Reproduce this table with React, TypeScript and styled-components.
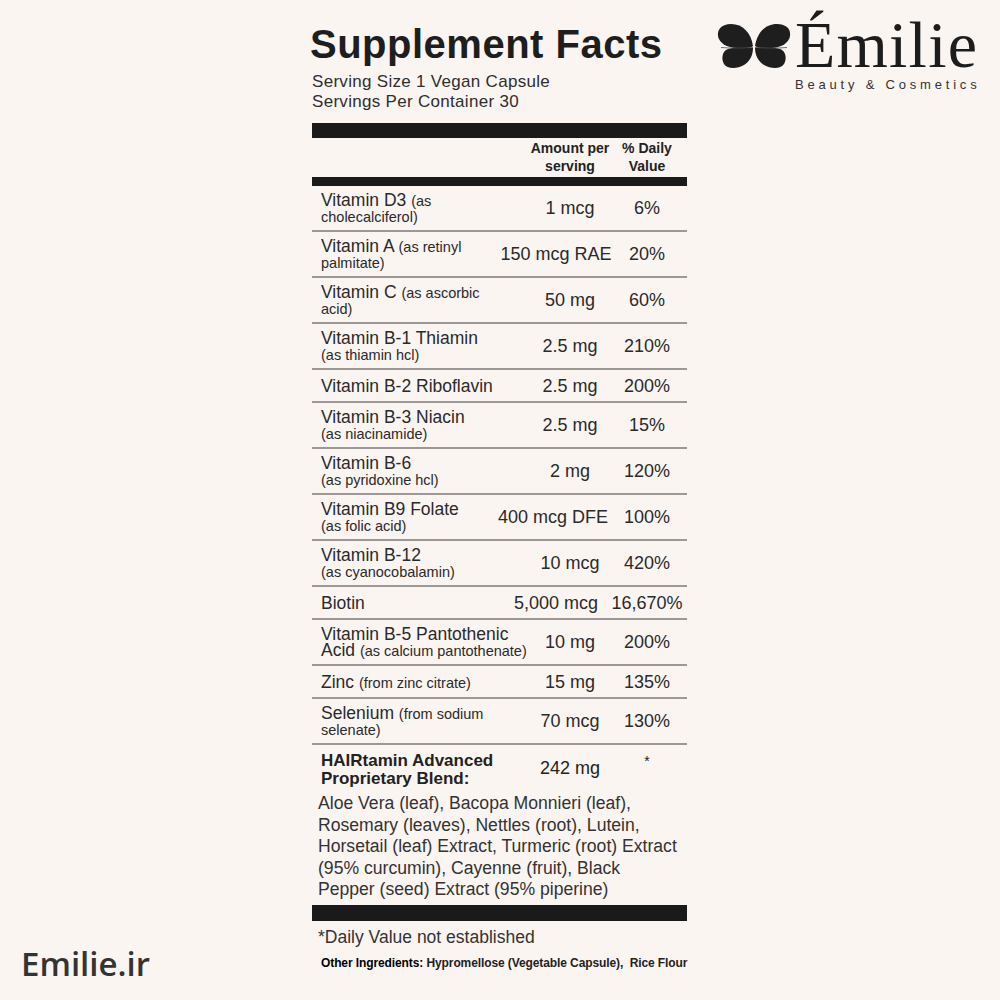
import React from 'react';
import styled, { createGlobalStyle } from 'styled-components';

const GlobalStyle = createGlobalStyle`
  html, body {
    margin: 0;
    padding: 0;
    background: #fbf5f2;
  }
  body {
    font-family: "Liberation Sans", Arial, sans-serif;
    color: #2a2a2a;
  }
`;

// Whole canvas: left corner text, label, logo
const Page = styled.div`
  width: 1000px;
  height: 1000px;
  display: grid;
  grid-template-columns: 310px 380px 1fr;
  overflow: hidden;
  background: #fbf5f2;
`;

const LeftCol = styled.div`
  display: flex;
  flex-direction: column;
  justify-content: flex-end;
  padding: 0 0 16px 21px;
`;

const SiteName = styled.div`
  font-family: "Open Sans", "Liberation Sans", sans-serif;
  font-weight: 600;
  font-size: 33px;
  line-height: 40px;
  color: #333;
`;

// Supplement label
const Label = styled.div`
  display: flex;
  flex-direction: column;
  padding: 20px 3px 0 2px;
`;

const Title = styled.h1`
  margin: 0 0 0 -2px;
  font-size: 40px;
  line-height: 48px;
  font-weight: 700;
  letter-spacing: 0.5px;
  color: #1e1e1e;
  white-space: nowrap;
`;

const Serving = styled.div`
  margin-top: 4px;
  font-size: 17px;
  line-height: 20px;
  letter-spacing: 0.3px;
  color: #2e2e2e;
`;

const Bar = styled.div<{ thickness: number; gap?: number }>`
  height: ${(p) => p.thickness}px;
  margin-top: ${(p) => p.gap || 0}px;
  background: #1a1a1a;
`;

const Grid = styled.div`
  display: grid;
  grid-template-columns: minmax(0, 1fr) 90px 64px;
  padding: 0 8px 0 9px;
`;

const HeaderRow = styled(Grid)`
  padding-top: 1px;
  padding-bottom: 2px;
  font-size: 14px;
  line-height: 18px;
  font-weight: 700;
  color: #222;
`;

const HeadCell = styled.div<{ col: number }>`
  grid-column: ${(p) => p.col};
  display: flex;
  flex-direction: column;
  align-items: center;
  white-space: nowrap;
`;

const Row = styled(Grid)`
  box-sizing: border-box;
  min-height: 33px;
  padding-top: 6px;
  padding-bottom: 6px;
  align-items: center;
  border-bottom: 2px solid #9d9896;
  font-size: 17.5px;
  line-height: 16px;
  color: #2a2a2a;
`;

const Name = styled.div`
  display: flex;
  flex-direction: column;
  white-space: nowrap;
`;

const NameLine = styled.span`
  display: block;
  height: 16px;
  line-height: 16px;
`;

const Sub = styled.span`
  font-size: 14.5px;
  line-height: 16px;
`;

// Amount / %DV cell; wide values sit a little left of the column centre
const Value = styled.div<{ shift?: number }>`
  display: flex;
  justify-content: center;
  white-space: nowrap;
  font-size: 18px;
  line-height: 16px;
  padding-right: ${(p) => p.shift || 0}px;
`;

const BlendRow = styled(Grid)`
  padding-top: 7px;
  font-size: 17px;
  line-height: 18px;
  color: #222;
`;

const BlendName = styled.div`
  font-weight: 700;
  white-space: nowrap;
`;

const BlendAmount = styled(Value)`
  padding-top: 7px;
  line-height: 18px;
`;

const Star = styled(Value)`
  font-size: 14px;
  line-height: 18px;
`;

const Ingredients = styled.div`
  margin-top: 5px;
  padding-left: 6px;
  font-size: 17.6px;
  line-height: 21.5px;
  color: #333;
  white-space: nowrap;
`;

const Footnote = styled.div`
  margin-top: 6px;
  padding-left: 6px;
  font-size: 17.5px;
  line-height: 20px;
  color: #333;
`;

const Other = styled.div`
  margin-top: 8px;
  padding-left: 9px;
  font-family: "Liberation Sans Narrow", "Arial Narrow", "Liberation Sans", sans-serif;
  font-size: 12px;
  line-height: 16px;
  font-weight: 700;
  color: #222;
  white-space: nowrap;
  letter-spacing: -0.1px;
`;

const OtherBold = styled.span`
  font-weight: 700;
  color: #000;
`;

// Brand logo, top right
const RightCol = styled.div`
  padding-left: 27px;
`;

const Logo = styled.div`
  display: flex;
  align-items: flex-start;
  gap: 4px;
`;

const Butterfly = styled.svg`
  margin-top: 23px;
  flex: none;
`;

const Brand = styled.div`
  padding-top: 14px;
  display: flex;
  flex-direction: column;
`;

const Wordmark = styled.div`
  font-family: "Liberation Serif", "Times New Roman", serif;
  font-size: 66px;
  line-height: 62px;
  letter-spacing: 1.2px;
  color: #1c1c1c;
`;

const Tagline = styled.div`
  margin-top: 1px;
  font-size: 13px;
  line-height: 16px;
  letter-spacing: 3.8px;
  color: #333;
  white-space: nowrap;
`;

type Nutrient = {
  lines: React.ReactNode[];
  amount: string;
  dv: string;
  shift?: number;
};

const nutrients: Nutrient[] = [
  { lines: [<>Vitamin D3 <Sub>(as</Sub></>, <Sub>cholecalciferol)</Sub>], amount: '1 mcg', dv: '6%' },
  { lines: [<>Vitamin A <Sub>(as retinyl</Sub></>, <Sub>palmitate)</Sub>], amount: '150 mcg RAE', dv: '20%', shift: 28 },
  { lines: [<>Vitamin C <Sub>(as ascorbic</Sub></>, <Sub>acid)</Sub>], amount: '50 mg', dv: '60%' },
  { lines: ['Vitamin B-1 Thiamin', <Sub>(as thiamin hcl)</Sub>], amount: '2.5 mg', dv: '210%' },
  { lines: ['Vitamin B-2 Riboflavin'], amount: '2.5 mg', dv: '200%' },
  { lines: ['Vitamin B-3 Niacin', <Sub>(as niacinamide)</Sub>], amount: '2.5 mg', dv: '15%' },
  { lines: ['Vitamin B-6', <Sub>(as pyridoxine hcl)</Sub>], amount: '2 mg', dv: '120%' },
  { lines: ['Vitamin B9 Folate', <Sub>(as folic acid)</Sub>], amount: '400 mcg DFE', dv: '100%', shift: 34 },
  { lines: ['Vitamin B-12', <Sub>(as cyanocobalamin)</Sub>], amount: '10 mcg', dv: '420%' },
  { lines: ['Biotin'], amount: '5,000 mcg', dv: '16,670%', shift: 28 },
  { lines: ['Vitamin B-5 Pantothenic', <>Acid <Sub>(as calcium pantothenate)</Sub></>], amount: '10 mg', dv: '200%' },
  { lines: [<>Zinc <Sub>(from zinc citrate)</Sub></>], amount: '15 mg', dv: '135%' },
  { lines: [<>Selenium <Sub>(from sodium</Sub></>, <Sub>selenate)</Sub>], amount: '70 mcg', dv: '130%' },
];

const ingredientLines = [
  'Aloe Vera (leaf), Bacopa Monnieri (leaf),',
  'Rosemary (leaves), Nettles (root), Lutein,',
  'Horsetail (leaf) Extract, Turmeric (root) Extract',
  '(95% curcumin), Cayenne (fruit), Black',
  'Pepper (seed) Extract (95% piperine)',
];

const ButterflyIcon = () => (
  <Butterfly width="74" height="46" viewBox="0 0 74 46">
    <g fill="#1e1e1e">
      <path d="M36 23 C 34 10, 26 1, 14 1 C 5 1, 0 6, 1 13 C 2 20, 10 25, 20 25 C 28 25, 34 25, 36 23 Z" />
      <path d="M36 25 C 30 24, 18 24, 11 26 C 5 28, 4 36, 7 41 C 10 46, 20 46, 27 42 C 33 38, 36 32, 36 25 Z" />
      <g transform="translate(74 0) scale(-1 1)">
        <path d="M36 23 C 34 10, 26 1, 14 1 C 5 1, 0 6, 1 13 C 2 20, 10 25, 20 25 C 28 25, 34 25, 36 23 Z" />
        <path d="M36 25 C 30 24, 18 24, 11 26 C 5 28, 4 36, 7 41 C 10 46, 20 46, 27 42 C 33 38, 36 32, 36 25 Z" />
      </g>
    </g>
    <path d="M4 24.5 C 14 25.5, 26 25, 36 24.5 M38 24.5 C 48 25, 60 25.5, 70 24.5" stroke="#4a4a4a" strokeWidth="0.8" fill="none" />
  </Butterfly>
);

const App = (): JSX.Element => (
  <>
    <GlobalStyle />
    <Page>
      <LeftCol>
        <SiteName>Emilie.ir</SiteName>
      </LeftCol>

      <Label>
        <Title>Supplement Facts</Title>
        <Serving>
          Serving Size 1 Vegan Capsule
          <br />
          Servings Per Container 30
        </Serving>

        <Bar thickness={15} gap={11} />
        <HeaderRow>
          <HeadCell col={2}>
            <span>Amount per</span>
            <span>serving</span>
          </HeadCell>
          <HeadCell col={3}>
            <span>% Daily</span>
            <span>Value</span>
          </HeadCell>
        </HeaderRow>
        <Bar thickness={9} />

        {nutrients.map((n) => (
          <Row key={n.amount + n.dv}>
            <Name>
              {n.lines.map((line, i) => (
                <NameLine key={i}>{line}</NameLine>
              ))}
            </Name>
            <Value shift={n.shift}>{n.amount}</Value>
            <Value>{n.dv}</Value>
          </Row>
        ))}

        <BlendRow>
          <BlendName>
            HAIRtamin Advanced
            <br />
            Proprietary Blend:
          </BlendName>
          <BlendAmount>242 mg</BlendAmount>
          <Star>*</Star>
        </BlendRow>

        <Ingredients>
          {ingredientLines.map((l) => (
            <div key={l}>{l}</div>
          ))}
        </Ingredients>

        <Bar thickness={16} gap={4} />
        <Footnote>*Daily Value not established</Footnote>
        <Other>
          <OtherBold>Other Ingredients:</OtherBold> Hypromellose (Vegetable Capsule),&nbsp; Rice Flour
        </Other>
      </Label>

      <RightCol>
        <Logo>
          <ButterflyIcon />
          <Brand>
            <Wordmark>Émilie</Wordmark>
            <Tagline>Beauty &amp; Cosmetics</Tagline>
          </Brand>
        </Logo>
      </RightCol>
    </Page>
  </>
);

export default App;
